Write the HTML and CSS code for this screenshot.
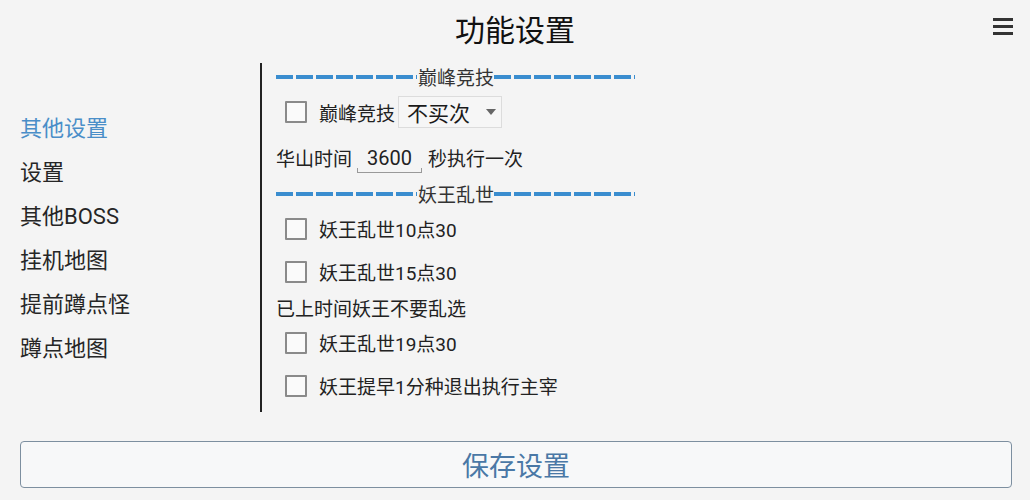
FILE: index.html
```html
<!DOCTYPE html>
<html lang="zh-CN">
<head>
  <meta charset="UTF-8" />
  <meta name="viewport" content="width=device-width, initial-scale=1.0"/>
  <title>功能设置</title>
  <link rel="stylesheet" href="styles.css">
</head>
<body>
  <header class="topbar">
    <h1>功能设置</h1>
    <button class="menu-btn" aria-label="菜单">
      <span></span><span></span><span></span>
    </button>
  </header>

  <div class="main">
    <nav class="side">
      <a class="active" href="#">其他设置</a>
      <a href="#">设置</a>
      <a href="#">其他BOSS</a>
      <a href="#">挂机地图</a>
      <a href="#">提前蹲点怪</a>
      <a href="#">蹲点地图</a>
    </nav>

    <section class="panel">
      <div class="divider"><span class="dash"></span>巅峰竞技<span class="dash"></span></div>
      <div class="row check-row first">
        <span class="box"></span>
        <span class="label">巅峰竞技</span>
        <span class="select">不买次<i class="caret"></i></span>
      </div>
      <div class="row time-row">
        <span>华山时间</span>
        <span class="num">3600</span>
        <span>秒执行一次</span>
      </div>
      <div class="divider second"><span class="dash"></span>妖王乱世<span class="dash"></span></div>
      <div class="row check-row">
        <span class="box"></span>
        <span class="label">妖王乱世10点30</span>
      </div>
      <div class="row check-row">
        <span class="box"></span>
        <span class="label">妖王乱世15点30</span>
      </div>
      <div class="row note">已上时间妖王不要乱选</div>
      <div class="row check-row">
        <span class="box"></span>
        <span class="label">妖王乱世19点30</span>
      </div>
      <div class="row check-row">
        <span class="box"></span>
        <span class="label">妖王提早1分种退出执行主宰</span>
      </div>
    </section>
  </div>

  <button class="save">保存设置</button>
</body>
</html>
```

FILE: styles.css
```css
body {
  margin: 0;
  font-family: Roboto, "Noto Sans CJK SC", sans-serif;
  background: #f4f4f4;
  color: #222;
}

.topbar {
  position: relative;
  height: 56px;
  display: flex;
  justify-content: center;
  align-items: center;
}

.topbar h1 {
  margin: 0;
  font-size: 30px;
  font-weight: normal;
  color: #111;
}

.menu-btn {
  position: absolute;
  right: 16px;
  top: 18px;
  width: 22px;
  padding: 0;
  border: none;
  background: none;
  display: flex;
  flex-direction: column;
  gap: 4px;
  align-items: center;
}

.menu-btn span {
  display: block;
  width: 20px;
  height: 3px;
  background: #333;
}

.main {
  display: flex;
  margin-top: 7px;
}

.side {
  width: 260px;
  padding-top: 44px;
  display: flex;
  flex-direction: column;
}

.side a {
  display: block;
  padding-left: 20px;
  line-height: 44px;
  font-size: 22px;
  color: #262626;
  text-decoration: none;
}

.side a.active {
  color: #4a8ec8;
}

.panel {
  border-left: 2px solid #222;
  padding: 0 0 5px 14px;
  font-size: 19px;
}

.divider {
  display: flex;
  align-items: center;
  height: 26px;
  color: #333;
  white-space: nowrap;
}

.divider.second {
  height: 28px;
}

/* dashed rule either side of a section title */
.dash {
  display: block;
  width: 141px;
  height: 4px;
  margin-top: 1px;
  background: repeating-linear-gradient(90deg, #3a8dcf 0 17px, transparent 17px 20px);
}

.divider .dash:first-child {
  margin-right: 1px;
}

.row {
  display: flex;
  align-items: center;
}

.check-row {
  height: 43px;
  padding-left: 9px;
}

.check-row.first {
  height: 46px;
}

.box {
  width: 18px;
  height: 18px;
  border: 2px solid #8a8a8a;
  border-radius: 1px;
  background: #fafafa;
  margin-right: 12px;
}

.select {
  display: flex;
  align-items: center;
  margin-left: 3px;
  height: 30px;
  padding: 0 5px 0 8px;
  border: 1px solid #dcdcdc;
  font-size: 21px;
  color: #1a1a1a;
  background: #f6f6f6;
}

.caret {
  margin-left: 16px;
  width: 0;
  height: 0;
  border-left: 5px solid transparent;
  border-right: 5px solid transparent;
  border-top: 6px solid #666;
}

.time-row {
  height: 44px;
}

.num {
  margin: 4px 6px 0 5px;
  width: 65px;
  text-align: center;
  font-size: 20px;
  padding-bottom: 2px;
  border-bottom: 1px solid #999;
  background:
    linear-gradient(#999, #999) left bottom / 1px 4px no-repeat,
    linear-gradient(#999, #999) right bottom / 1px 4px no-repeat;
}

.note {
  height: 28px;
}

.save {
  display: block;
  margin: 29px 18px 0 20px;
  width: calc(100% - 38px);
  height: 47px;
  border: 1px solid #7d8fa0;
  border-radius: 4px;
  background: #f7f8f9;
  font-family: Roboto, "Noto Sans CJK SC", sans-serif;
  font-size: 27px;
  color: #4a78a6;
}
```
